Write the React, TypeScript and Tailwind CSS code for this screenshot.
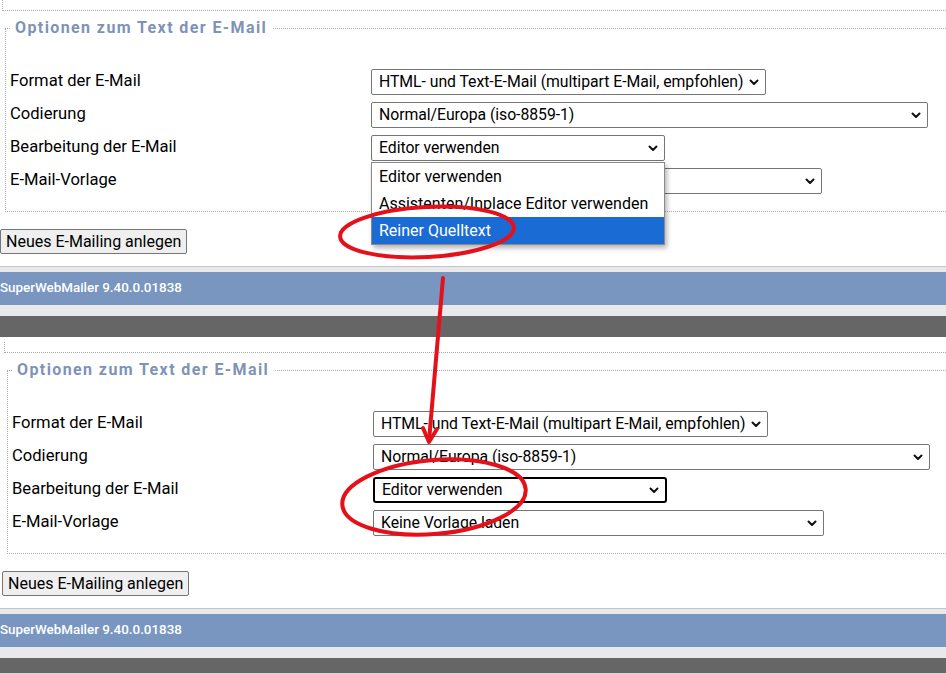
import React from 'react'

type Row = { label: string; value: string; width: string }

const rows: Row[] = [
  { label: 'Format der E-Mail', value: 'HTML- und Text-E-Mail (multipart E-Mail, empfohlen)', width: 'w-[395px]' },
  { label: 'Codierung', value: 'Normal/Europa (iso-8859-1)', width: 'w-[557px]' },
  { label: 'Bearbeitung der E-Mail', value: 'Editor verwenden', width: 'w-[294px]' },
  { label: 'E-Mail-Vorlage', value: 'Keine Vorlage laden', width: 'w-[451px]' },
]

const editorOptions = ['Editor verwenden', 'Assistenten/Inplace Editor verwenden', 'Reiner Quelltext']

const Chevron = () => (
  <svg width="10" height="7" viewBox="0 0 10 7" className="shrink-0">
    <path d="M1.5 1.5 L5 5 L8.5 1.5" fill="none" stroke="#111" strokeWidth="2" strokeLinecap="round" strokeLinejoin="round" />
  </svg>
)

const SelectBox = ({ value, width, focused, hideValue }: { value: string; width: string; focused?: boolean; hideValue?: boolean }) => (
  <div
    className={`${width} h-[26px] flex items-center justify-between bg-white pl-[7px] pr-[6px] ${
      focused ? 'border-2 border-black rounded-[3px] pl-[6px] pr-[5px]' : 'border border-[#767676] rounded-[2px]'
    }`}
  >
    <span className="text-[15.8px] leading-[20px] tracking-[-0.05px] text-black whitespace-nowrap">{hideValue ? '' : value}</span>
    <Chevron />
  </div>
)

// open option list of the "Bearbeitung" select
const OptionList = () => (
  <div className="absolute left-0 top-[27px] w-[294px] bg-white border border-[#8a8a8a] shadow-[2px_3px_5px_rgba(0,0,0,0.3)] z-10">
    {editorOptions.map((o, i) => (
      <div
        key={o}
        className={`h-[27px] flex items-center px-[7px] text-[16px] whitespace-nowrap ${
          i === 2 ? 'bg-[#1a6bd4] text-white' : 'text-black'
        }`}
      >
        {o}
      </div>
    ))}
  </div>
)

const Screen = ({ open, shift }: { open?: boolean; shift?: boolean }) => (
  <div className={`h-[342px] flex flex-col ${shift ? 'pl-[2px]' : ''}`}>
    {/* end of the previous fieldset */}
    <div className="h-[11px] ml-[2px] border-l border-b border-dotted border-[#a9a9a9]" />

    <fieldset className="mt-[7px] ml-[5px] border border-r-0 border-dotted border-[#a9a9a9] pl-[4px] pb-[17px]">
      <legend className="px-[5px] text-[16px] leading-[20px] font-bold tracking-[1.4px] text-[#7e93b6]">
        Optionen zum Text der E-Mail
      </legend>
      <div className="pt-[31px] flex flex-col gap-[7px]">
        {rows.map((r, i) => (
          <div key={r.label} className="flex items-start h-[26px]">
            <div className="w-[361px] text-[16.6px] leading-[24px] text-black">{r.label}</div>
            <div className="relative">
              <SelectBox value={r.value} width={r.width} focused={!open && i === 2} hideValue={open && i === 3} />
              {open && i === 2 && <OptionList />}
            </div>
          </div>
        ))}
      </div>
    </fieldset>

    <div className="mt-[17px]">
      <button className="h-[25px] px-[5px] bg-[#efefef] border border-[#767676] rounded-[2px] text-[16px] leading-[20px] text-black">
        Neues E-Mailing anlegen
      </button>
    </div>

    {/* footer bars */}
    <div className={`mt-[12px] border-t border-[#c4c4c4] bg-[#e9e9eb] pt-[5px] ${shift ? '-ml-[2px]' : ''}`}>
      <div className="h-[33px] bg-[#7896bf] flex items-center text-white text-[13.4px] font-medium">
        SuperWebMailer 9.40.0.01838
      </div>
      <div className="h-[11px] bg-[#e9e9eb]" />
      <div className="h-[21px] bg-[#666666]" />
    </div>
  </div>
)

const App = () => {
  return (
    <div className="relative w-[946px] h-[673px] overflow-hidden bg-white font-['Roboto',sans-serif]">
      <Screen open />
      <Screen shift />

      {/* red markings on top */}
      <svg className="absolute inset-0 pointer-events-none z-20" width="946" height="673" viewBox="0 0 946 673">
        <g fill="none" stroke="#e5111a" strokeWidth="4" strokeLinecap="round" strokeLinejoin="round">
          <ellipse cx="427" cy="232" rx="87" ry="25" transform="rotate(-3 427 232)" />
          <path d="M443 278 L429 441" />
          <path d="M423 428 L429 442 L437 429" />
          <ellipse cx="434" cy="497" rx="92" ry="37" transform="rotate(-5 434 497)" />
        </g>
      </svg>
    </div>
  )
}

export default App
